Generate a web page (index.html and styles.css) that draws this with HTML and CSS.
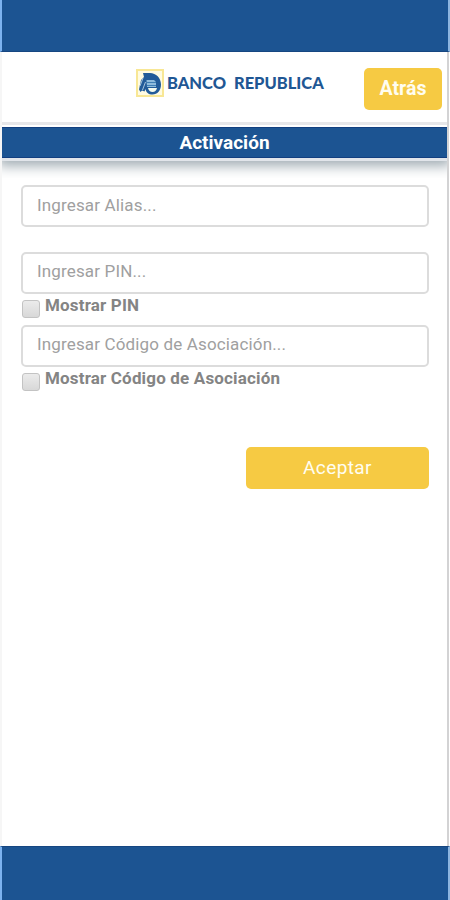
FILE: index.html
```html
<!DOCTYPE html>
<html lang="es">
<head>
  <meta charset="UTF-8">
  <title>Activación</title>
  <link rel="stylesheet" href="styles.css">
</head>
<body>

  <div class="system-bar"></div>

  <div class="screen">
    <header class="header">
      <div class="brand">
        <svg class="brand-icon" width="28" height="28" viewBox="0 0 28 28">
          <rect x="1" y="1" width="26" height="26" fill="#fffbe2" stroke="#f8e795" stroke-width="2"/>
          <path d="M7 4H14C20 4 25 9 25 15.500C25 21.500 21.500 25.500 16.500 25.500C12.500 25.500 10 23.500 9.500 20L8.500 22.500L6 21.500L4.500 23L3 20.500L5 11L8 8Z" fill="#225b99"/>
          <path d="M4 17L7 9M6.500 21L9.500 13" stroke="#a9c5dc" stroke-width="1"/>
          <path d="M10.500 11H18L20 13V18H11Z" fill="#8fbbdc"/>
          <path d="M10.500 13.500H20M11 16.500H20" stroke="#3f7fb5" stroke-width="1"/>
          <path d="M12 19H21Q20 23 16.500 23Q13 23 12 19Z" fill="#f2f9ee"/>
        </svg>
        <span class="brand-name">BANCO&nbsp; REPUBLICA</span>
      </div>
      <button type="button" class="btn btn-back">Atrás</button>
    </header>

    <h1 class="title">Activación</h1>

    <form class="form">
      <input type="text" class="field" placeholder="Ingresar Alias...">
      <input type="text" class="field field-secret field-pin" placeholder="Ingresar PIN...">
      <label class="check"><input type="checkbox"><span>Mostrar PIN</span></label>
      <input type="text" class="field field-secret" placeholder="Ingresar Código de Asociación...">
      <label class="check"><input type="checkbox"><span>Mostrar Código de Asociación</span></label>
      <button type="button" class="btn btn-accept">Aceptar</button>
    </form>
  </div>

  <div class="system-bar"></div>

</body>
</html>
```

FILE: styles.css
```css
:root {
  --blue: #1c5492;
  --yellow: #f6ca43;
  --border: #dcdcdc;
}

* { box-sizing: border-box; }

body {
  margin: 0;
  height: 900px;
  display: flex;
  flex-direction: column;
  overflow: hidden;
  background: #fff;
  font-family: Roboto, sans-serif;
}

.system-bar {
  height: 52px;
  flex: none;
  background: var(--blue);
  border-left: 2px solid #7db3f0;
  border-right: 2px solid #8db5df;
  border-bottom: 1px solid #164681;
}
.screen + .system-bar {
  height: 54px;
  border-bottom: none;
  border-top: 1px solid #164681;
}

.screen {
  flex: 1;
  margin-right: 1px;
  border-left: 2px solid #f6f6f6;
  border-right: 2px solid #d3d3d4;
}

.header {
  height: 73px;
  display: flex;
  justify-content: space-between;
  padding: 16px 5px 0 134px;
  border-bottom: 3px solid #e7e7e9;
}
.brand {
  display: flex;
  height: 30px;
  align-items: center;
  gap: 3px;
}
.brand-icon { display: block; }
.brand-name {
  color: #1f5794;
  font-family: Lato, sans-serif;
  font-size: 16.5px;
  font-weight: 900;
  white-space: nowrap;
}

.btn {
  padding: 0;
  border: none;
  border-radius: 5px;
  background: var(--yellow);
  color: #fffdf0;
  font-family: inherit;
  font-size: 19px;
}
.btn-back {
  width: 78px;
  height: 42px;
  padding-bottom: 2px;
  font-size: 19.5px;
  font-weight: 700;
}

.title {
  height: 31px;
  margin: 2px 0 0;
  background: var(--blue);
  border: 1px solid #123f80;
  border-width: 1px 0;
  box-shadow: 0 3px 0 #e1e5ea, 0 4px 12px 4px #a0acb3;
  clip-path: inset(0 0 -20px 0);
  color: #fff;
  font-size: 19px;
  line-height: 30px;
  text-align: center;
}

.form {
  display: flex;
  flex-direction: column;
  padding: 27px 18px 0 19px;
}
.field {
  height: 42px;
  padding: 0 14px 3px;
  border: 2px solid var(--border);
  border-radius: 5px;
  background: #fff;
  font-family: inherit;
  font-size: 17px;
  letter-spacing: 0.15px;
}
.field::placeholder { color: #a0a0a0; opacity: 1; }
.field-secret { padding-bottom: 5px; }
.field-pin { margin-top: 25px; }

.check {
  display: flex;
  height: 31px;
  padding: 1px 0 0 1px;
  gap: 5px;
  color: #848484;
  font-size: 17px;
  font-weight: 700;
  letter-spacing: 0.17px;
  line-height: 20px;
}
.check input {
  appearance: none;
  width: 18px;
  height: 18px;
  margin: 5px 0 0;
  border: 1px solid #c3c3c3;
  border-radius: 3px;
  background: linear-gradient(#ebebeb, #d8d8d8);
}

.btn-accept {
  align-self: flex-end;
  width: 183px;
  height: 42px;
  margin-top: 49px;
  padding-bottom: 2px;
  letter-spacing: 0.4px;
}
```
